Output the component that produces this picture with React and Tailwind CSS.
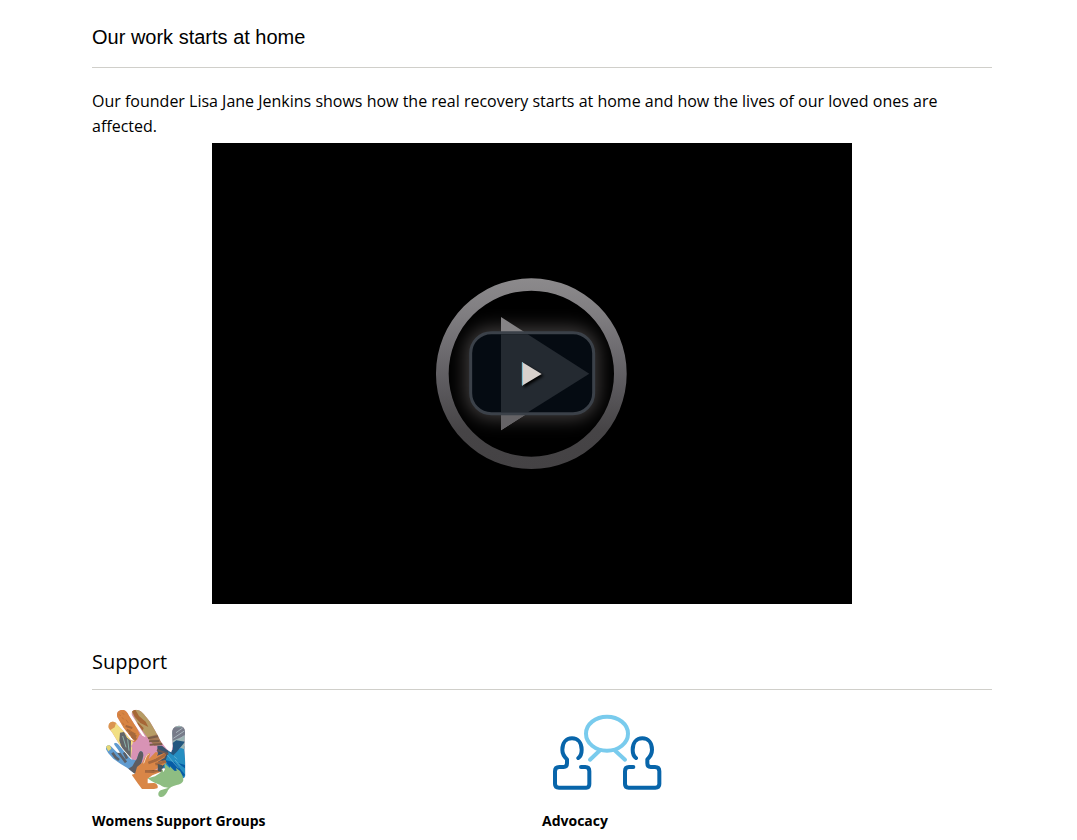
function PlayArtwork() {
  return (
    <svg aria-hidden="true" className="h-[220px] w-[230px]" viewBox="-9 -4 690 660">
      <defs>
        <linearGradient id="ring" x1="0" y1="0" x2="0" y2="1">
          <stop offset="0" stopColor="#8c8a8c" />
          <stop offset="0.2" stopColor="#7f7d80" />
          <stop offset="0.5" stopColor="#626064" />
          <stop offset="0.8" stopColor="#464446" />
          <stop offset="1" stopColor="#444244" />
        </linearGradient>
        <filter id="glow" x="-40%" y="-50%" width="180%" height="200%" colorInterpolationFilters="sRGB">
          <feGaussianBlur stdDeviation="26" />
        </filter>
        <filter id="shadow" x="-50%" y="-50%" width="200%" height="200%">
          <feGaussianBlur stdDeviation="4" />
        </filter>
        <clipPath id="disc">
          <circle cx="334" cy="325" r="249" />
        </clipPath>
      </defs>
      <g clipPath="url(#disc)">
        <rect x="135" y="185" width="402" height="277" rx="80" fill="#3e3b3b" filter="url(#glow)" />
      </g>
      <path d="M334 39a286 286 0 1 0 0 572a286 286 0 1 0 0-572zM334 76a248 249 0 1 1 0 498a248 249 0 1 1 0-498z" fill="url(#ring)" fillRule="evenodd" />
      <path d="M243 155L508 325L243 495z" fill="#858385" />
      <path d="M243 449h72L243 495z" fill="#656366" />
      <rect x="152" y="202" width="369" height="243" rx="62" fill="#050b12" stroke="#3b4149" strokeWidth="9" />
      <path d="M243 207h80L508 325L325 440H243z" fill="#242a31" />
      <path d="M312 296L371 331L312 367z" fill="#050505" filter="url(#shadow)" />
      <path d="M306 290L365 326L306 361z" fill="#d8d1cc" />
      <path d="M307 291v69" stroke="#75bbcf" strokeWidth="3" />
    </svg>
  );
}

function HandsIcon() {
  return (
    <svg aria-hidden="true" className="h-[105px] w-[100px]" viewBox="0 0 300 315">
      <defs>
        <clipPath id="bigHand">
          <path d="M41 84C36 66 58 58 67 74L85 93L108 121L118 124L86 83L67 51C62 35 74 28 86 30C93 31 98 39 101 46L119 74L142 107L152 112L124 66L111 46C107 34 116 28 127 30C138 31 146 42 153 50L165 65L181 93L197 124L215 147L229 158L233 139L231 101C231 86 239 77 252 77C264 77 270 86 270 98L268 150L271 190V228C266 238 261 237 256 230L230 212L205 205L150 215L120 190L108 174L82 144L70 128L52 98Z" />
        </clipPath>
        <clipPath id="blueHand">
          <path d="M33 148C31 136 43 132 50 141L68 159L76 158L58 134C56 126 64 126 71 134L92 160L108 178L122 181C128 176 128 163 134 155C140 151 146 157 145 167L139 190L125 224L112 216L96 203L76 191L55 176L40 160Z" />
        </clipPath>
        <clipPath id="orangeHand">
          <path d="M120 221L126 201L143 187L150 172L160 160L166 160L161 178L182 156L190 158L184 169L207 159L214 164L208 173L187 187L211 181L215 188L200 199L178 210L199 208L202 214L172 226L158 236L158 250L176 249C186 249 191 259 187 265L177 267L141 267L128 250L110 224Z" />
        </clipPath>
      </defs>
      <g clipPath="url(#bigHand)">
        <path d="M0 0h300v315H0z" fill="#d893b5" />
        <path d="M30 55L68 55L114 122L107 179L40 130z" fill="#f2df83" />
        <path d="M36 60h30l-7 22l-22 14z" fill="#db9451" />
        <path d="M75 98l12-2l9 17l12 9l-1 52l-22-18l-12-34z" fill="#636569" />
        <path d="M83 108l10 34m5-24l4 34" stroke="#8db4ab" strokeWidth="3" />
        <path d="M60 23h38L134 103l-12 25l-12-5L60 60z" fill="#d78443" />
        <path d="M92 78l20 6m-17 5l26 15m-21-4l24 10m-16 0l16 8" stroke="#a6693d" strokeWidth="7" />
        <path d="M72 43l5 5m5-10l5 6m-6 8l5 6m7 1l7 10m-18-1l5 7m18 13l3 8" stroke="#c0743a" strokeWidth="3" />
        <path d="M105 25h35L195 112l-37 1l-30-40z" fill="#b69c65" />
        <path d="M111 33l10-4l11 19l20 17l8 16l-24-12l-17-19zM128 66l18 18l-3 8l-15-20z" fill="#a66737" />
        <path d="M157 112l32-10l13 32l-24 3z" fill="#a57956" />
        <path d="M159 115l30-6m-27 15l31-1m-29 11l38-2" stroke="#7b5d48" strokeWidth="6" />
        <path d="M108 138l17-18l30 15l40 14l-18 26l-42 4z" fill="#d893b5" />
        <path d="M193 140l36 17l45-21v100h-17l-40-35l-25 10z" fill="#258ec1" />
        <path d="M187 137h14l20 17l-14 42l-6 20h-12z" fill="#39546d" />
        <path d="M186 150l34 12m-33 4l22 8m-19 7l18 4" stroke="#6b5855" strokeWidth="7" />
        <path d="M228 70h45v80l-42-17z" fill="#9bb5b3" />
        <path d="M231 82h41v24l-19 8l-20 8z" fill="#777b89" />
        <path d="M243 98l20-14m-28 31l33-22m-33 38l34-25m-34 37l34-24" stroke="#a7b5bc" strokeWidth="3" />
        <path d="M233 129l11-8l26 4l-23 29l-12 12l-13-9l11-8z" fill="#23577f" />
        <path d="M207 179l32 8l32 38l-12 8l-33-29zM247 188l23 7v10z" fill="#075da5" />
        <path d="M217 165l16 20l18 20m-11-25l15 17m-18-28l10 8" fill="none" stroke="#70b9d6" strokeWidth="2" />
      </g>
      <g clipPath="url(#blueHand)">
        <path d="M0 100h170v140H0z" fill="#609bcf" />
        <path d="M31 137l13-5l5 14l-9 8z" fill="#e5d774" />
        <path d="M52 158l10 14l10 8m-4-26l13 17l12 16m-6-30l9 19" stroke="#5b6069" strokeWidth="8" />
        <path d="M148 151l-17 1l-8 27l-11 20l-12 7l25 22l10-31l14-26z" fill="#5d5c61" />
      </g>
      <g clipPath="url(#orangeHand)">
        <path d="M105 140h120v150H105z" fill="#d98647" />
        <path d="M160 189l24-9l30-18m-33 31l34-9m-65 30l25 1l25-7" stroke="#a6683e" strokeWidth="8" />
      </g>
      <path d="M158 235l22-6l15-10l8-11l2 9l5-9l-1-18l15 15l1-6l13 13l7 1l-2-9l12 9l8 15l2 12c-1 9-11 14-20 15c-14 3-21 8-26 16c-6 14-14 23-25 19c-7-4-4-16 3-19l24-8c-8 0-14 0-25-8c-12-4-24-9-38-20z" fill="#8ebd82" />
      <path d="M188 192l14 3l-3 20l-10-1z" fill="#47565d" />
      <path d="M146 190l9-23l8-6" fill="none" stroke="#fff" strokeWidth="2" />
    </svg>
  );
}

function AdvocacyIcon() {
  return (
    <svg aria-hidden="true" className="h-[100px] w-[150px]" viewBox="0 0 450 300" fill="none" strokeLinecap="round" strokeLinejoin="round">
      <g stroke="#79cbed" strokeWidth="12">
        <ellipse cx="231" cy="101" rx="63" ry="51" />
        <path d="M210 151L180 179M254 151L285 179" />
      </g>
      <g stroke="#0865aa" strokeWidth="12">
        <path d="M145 174C153 168 155 160 155 149C155 129 144 115 126 115C108 115 97 129 97 149C97 164 103 170 111 178V190Q111 201 101 201H88Q75 201 75 214V252Q75 263 87 263H169Q178 263 178 252V214Q178 201 166 201H153" />
        <path d="M318 174C310 168 308 160 308 149C308 129 319 115 337 115C355 115 366 129 366 149C366 164 360 170 352 178V190Q352 201 362 201H375Q388 201 388 214V252Q388 263 376 263H296Q285 263 285 252V214Q285 201 297 201H310" />
      </g>
    </svg>
  );
}

export default function App() {
  return (
    <main className="bg-white pr-[85px] pl-[92px] font-['Open_Sans',sans-serif] text-black">
      <section>
        <h2 className="border-b border-[#d0cfca] pt-[25px] pb-[17px] font-['Liberation_Sans',sans-serif] text-[20px] leading-[25px]">
          Our work starts at home
        </h2>
        <div className="pt-[21px] pr-5">
          <p className="text-[16px] leading-[25px]">
            Our founder Lisa Jane Jenkins shows how the real recovery starts at home and how the lives of our loved ones are affected.
          </p>
          <button type="button" aria-label="Play video" className="mx-auto mt-1 flex h-[461px] w-full max-w-[640px] cursor-pointer items-center justify-center bg-black">
            <PlayArtwork />
          </button>
        </div>
      </section>
      <section className="pt-11">
        <h2 className="border-b border-[#d0cfca] pb-[14px] text-[20px] leading-[27px]">Support</h2>
        <div className="grid grid-cols-2 pt-[10px]">
          <article>
            <div className="ml-[3px] h-[110px]">
              <HandsIcon />
            </div>
            <h3 className="text-[14px] leading-[22px] font-bold">Womens Support Groups</h3>
          </article>
          <article>
            <div className="-ml-3 h-[110px]">
              <AdvocacyIcon />
            </div>
            <h3 className="text-[14px] leading-[22px] font-bold">Advocacy</h3>
          </article>
        </div>
      </section>
    </main>
  );
}
